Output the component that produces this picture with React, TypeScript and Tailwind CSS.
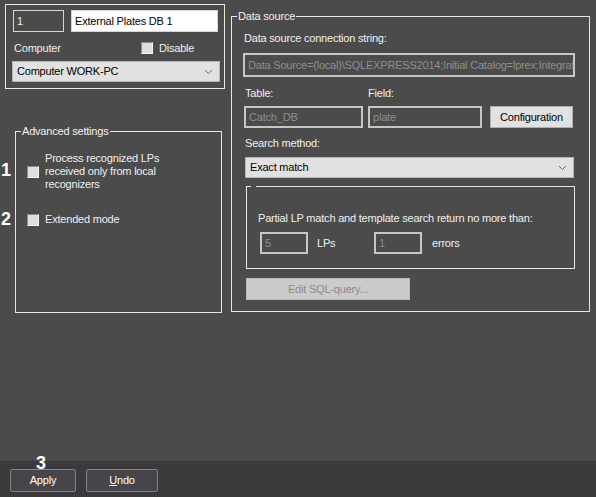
import React from "react";

function Chevron() {
  return (
    <svg width="9" height="6" viewBox="0 0 9 6" className="shrink-0">
      <path d="M1 1 L4.5 4.5 L8 1" fill="none" stroke="#6a6a6a" strokeWidth="1" />
    </svg>
  );
}

function Check() {
  return (
    <div className="w-[12px] h-[12px] shrink-0 bg-[#dedede] border border-t-[#8c8c8c] border-l-[#8c8c8c] border-r-[#f5f5f5] border-b-[#f5f5f5]" />
  );
}

export default function App() {
  return (
    <div className="relative w-[596px] h-[497px] bg-[#4b4b4b] flex flex-col text-[11px] leading-[13px] tracking-[-0.2px] text-[#f0f0f0] font-['Liberation_Sans',Arial,sans-serif] overflow-hidden">
      <div className="flex-1 flex">
        {/* Left column */}
        <div className="w-[231px] shrink-0 flex flex-col">
          <div className="mt-[4px] ml-[5px] w-[220px] h-[85px] border border-[#e6e6e6] flex flex-col">
            <div className="mt-[5px] ml-[7px] flex gap-[7px]">
              <div className="w-[51px] h-[22px] border border-[#d6d6d6] flex items-center pl-[3px]">1</div>
              <div className="w-[147px] h-[22px] bg-white border border-[#d6d6d6] flex items-center pl-[3px] text-black">External Plates DB 1</div>
            </div>
            <div className="mt-[9px] ml-[8px] h-[14px] flex items-center">
              <span className="w-[127px]">Computer</span>
              <Check />
              <span className="ml-[6px]">Disable</span>
            </div>
            <div className="mt-[6px] ml-[6px] w-[208px] h-[21px] bg-[#e1e1e1] border border-[#b4b4b4] flex items-center justify-between pl-[4px] pr-[6px] text-black">
              <span>Computer WORK-PC</span>
              <Chevron />
            </div>
          </div>

          <fieldset className="mt-[36px] ml-[15px] w-[207px] h-[188px] border border-[#e6e6e6] flex flex-col">
            <legend className="ml-[5px] px-[1px] leading-[13px]">Advanced settings</legend>
            <div className="mt-[14px] ml-[11px] flex items-center gap-[6px]">
              <Check />
              <span className="leading-[13px]">
                Process recognized LPs
                <br />
                received only from local
                <br />
                recognizers
              </span>
            </div>
            <div className="mt-[22px] ml-[11px] flex items-center gap-[6px]">
              <Check />
              <span>Extended mode</span>
            </div>
          </fieldset>
        </div>

        {/* Data source */}
        <fieldset className="mt-[10px] w-[359px] h-[302px] border border-[#e6e6e6] flex flex-col">
          <legend className="ml-[5px] px-[1px] leading-[13px]">Data source</legend>
          <div className="mt-[9px] ml-[12px]">Data source connection string:</div>
          <div className="mt-[8px] ml-[11px] w-[332px] h-[24px] border-2 border-[#c6c6c6] flex items-center pl-[3px] text-[#8e8e8e] whitespace-nowrap overflow-hidden">
            Data Source=(local)\SQLEXPRESS2014;Initial Catalog=lprex;Integrated Security=True
          </div>
          <div className="mt-[10px] ml-[13px] flex">
            <span className="w-[123px]">Table:</span>
            <span>Field:</span>
          </div>
          <div className="mt-[6px] ml-[12px] flex items-center">
            <div className="w-[119px] h-[22px] border-2 border-[#c6c6c6] flex items-center pl-[3px] text-[#8e8e8e]">Catch_DB</div>
            <div className="ml-[5px] w-[114px] h-[22px] border-2 border-[#c6c6c6] flex items-center pl-[3px] text-[#8e8e8e]">plate</div>
            <div className="ml-[8px] w-[83px] h-[22px] bg-[#e1e1e1] border border-[#adadad] flex items-center justify-center text-black">Configuration</div>
          </div>
          <div className="mt-[9px] ml-[13px]">Search method:</div>
          <div className="mt-[7px] ml-[13px] w-[329px] h-[21px] bg-[#e1e1e1] border border-[#b4b4b4] flex items-center justify-between pl-[4px] pr-[6px] text-black">
            <span>Exact match</span>
            <Chevron />
          </div>
          <fieldset className="mt-[8px] ml-[14px] w-[329px] h-[83px] border border-[#e6e6e6] flex flex-col">
            <legend className="ml-[4px] w-[5px] h-0"></legend>
            <div className="mt-[25px] ml-[11px]">Partial LP match and template search return no more than:</div>
            <div className="mt-[7px] ml-[13px] flex items-center">
              <div className="w-[48px] h-[22px] border-2 border-[#c6c6c6] flex items-center pl-[3px] text-[#8e8e8e]">5</div>
              <span className="ml-[9px] w-[57px]">LPs</span>
              <div className="w-[48px] h-[22px] border-2 border-[#c6c6c6] flex items-center pl-[3px] text-[#8e8e8e]">1</div>
              <span className="ml-[10px]">errors</span>
            </div>
          </fieldset>
          <div className="mt-[9px] ml-[14px] w-[164px] h-[22px] bg-[#cbcbcb] border border-[#bdbdbd] flex items-center justify-center text-[#8a8a8a]">Edit SQL-query...</div>
        </fieldset>
      </div>

      {/* Bottom bar */}
      <div className="h-[36px] shrink-0 bg-[#3b393b] flex gap-[10px] pl-[10px] pt-[8px]">
        <div className="w-[66px] h-[23px] rounded-[2px] border border-[#858585] bg-[#474549] flex items-center justify-center text-white">Apply</div>
        <div className="w-[72px] h-[23px] rounded-[2px] border border-[#858585] bg-[#474549] flex items-center justify-center text-white">
          <span><span className="underline">U</span>ndo</span>
        </div>
      </div>

      {/* Annotation numbers */}
      <div className="absolute left-[1px] top-[161px] text-[18px] leading-none tracking-normal font-bold text-white">1</div>
      <div className="absolute left-[1px] top-[210px] text-[18px] leading-none tracking-normal font-bold text-white">2</div>
      <div className="absolute left-[36px] top-[454px] text-[18px] leading-none tracking-normal font-bold text-white">3</div>
    </div>
  );
}
